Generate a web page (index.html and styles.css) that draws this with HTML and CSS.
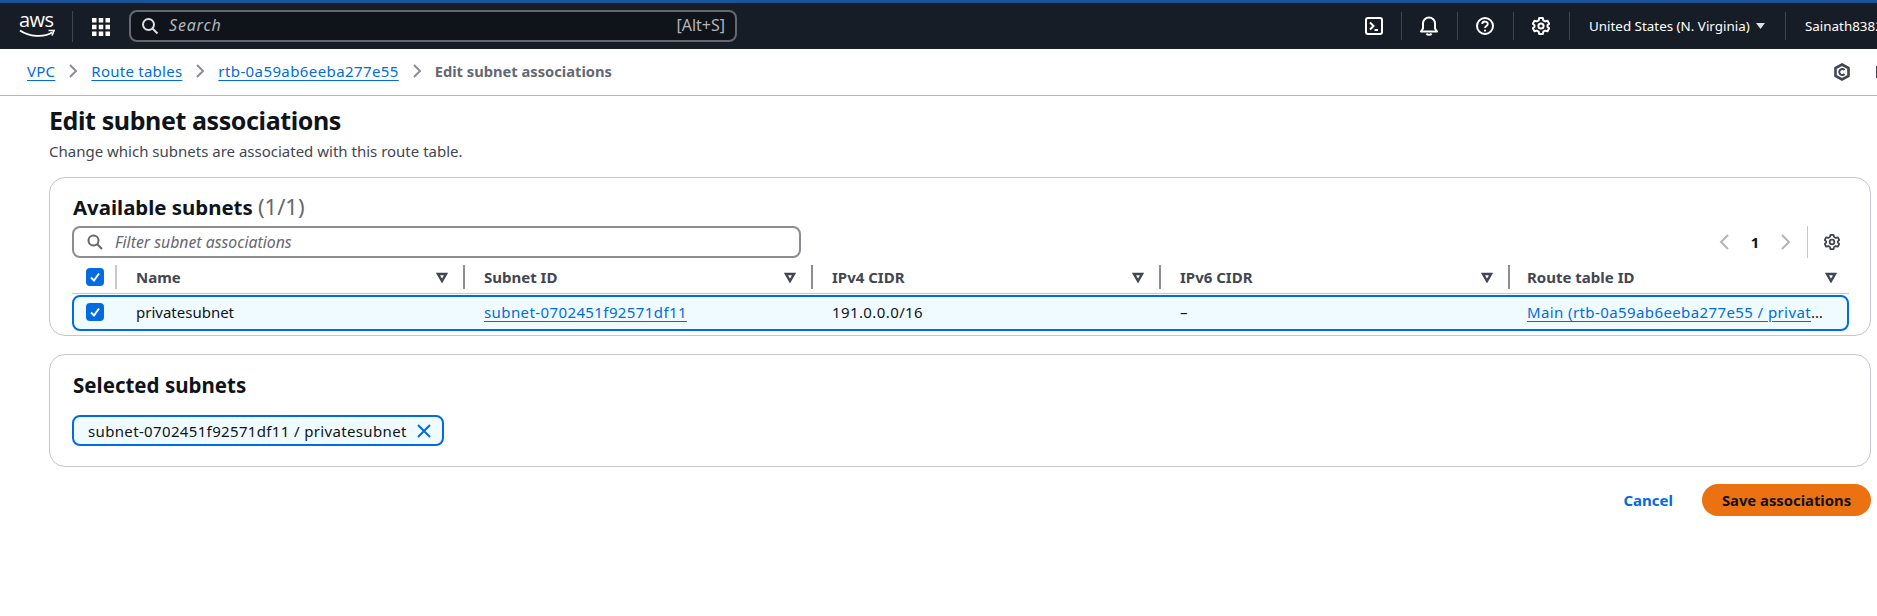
FILE: index.html
```html
<!DOCTYPE html>
<html lang="en">
<head>
<meta charset="utf-8">
<title>Edit subnet associations</title>
<link rel="stylesheet" href="styles.css">
</head>
<body>
<header class="topnav">
  <div class="logo">
    <span class="logo-text">aws</span>
    <svg class="smile" width="36" height="9" viewBox="0 0 36 9"><path d="M1 1.5C10 8 25 8.5 33 3.5" fill="none" stroke="#fff" stroke-width="1.8"/><path d="M29.5 1.5L35 1.5L33 6.5" fill="none" stroke="#fff" stroke-width="1.6"/></svg>
  </div>
  <div class="apps">
    <svg width="18" height="18" viewBox="0 0 18 18" fill="#fff"><rect x="0" y="0" width="4.5" height="4.5"/><rect x="6.75" y="0" width="4.5" height="4.5"/><rect x="13.5" y="0" width="4.5" height="4.5"/><rect x="0" y="6.75" width="4.5" height="4.5"/><rect x="6.75" y="6.75" width="4.5" height="4.5"/><rect x="13.5" y="6.75" width="4.5" height="4.5"/><rect x="0" y="13.5" width="4.5" height="4.5"/><rect x="6.75" y="13.5" width="4.5" height="4.5"/><rect x="13.5" y="13.5" width="4.5" height="4.5"/></svg>
  </div>
  <div class="search">
    <svg width="18" height="18" viewBox="0 0 18 18" fill="none" stroke="#dedee3" stroke-width="2"><circle cx="7.5" cy="7.5" r="5.5"/><path d="M11.5 11.5L16.5 16.5"/></svg>
    <span class="search-ph">Search</span>
    <span class="search-key">[Alt+S]</span>
  </div>
  <div class="nav-right">
    <div class="nav-cell cell-term">
      <svg width="18" height="18" viewBox="0 0 18 18" fill="none" stroke="#fff" stroke-width="2"><rect x="1" y="1" width="16" height="16" rx="2"/><path d="M5 5.5L8.5 9L5 12.5M9.5 13H13"/></svg>
    </div>
    <div class="nav-cell cell-icon">
      <svg width="18" height="20" viewBox="0 0 18 20" fill="none" stroke="#fff" stroke-width="2"><path d="M1 15.5H17L15 12.5V7.5A6 6 0 0 0 3 7.5V12.5Z" stroke-linejoin="round"/><path d="M6.5 17.5C7.5 19.3 10.5 19.3 11.5 17.5"/></svg>
    </div>
    <div class="nav-cell cell-icon">
      <svg width="18" height="18" viewBox="0 0 18 18" fill="none" stroke="#fff" stroke-width="2"><circle cx="9" cy="9" r="8"/><path d="M6.2 7C6.4 3.6 11.8 3.8 11.8 7C11.8 9 9 9 9 11" stroke-width="1.8"/><circle cx="9" cy="13.6" r="1.1" fill="#fff" stroke="none"/></svg>
    </div>
    <div class="nav-cell cell-icon">
      <svg class="gear" width="18" height="18" viewBox="0 0 18 18" fill="none" stroke="#fff" stroke-width="2" stroke-linejoin="round"><circle cx="9" cy="9" r="2.6"/><path d="M7.2 1H10.8L11.3 3.3L13.2 4.4L15.5 3.7L17.2 6.8L15.5 8.3V9.7L17.2 11.2L15.5 14.3L13.2 13.6L11.3 14.7L10.8 17H7.2L6.7 14.7L4.8 13.6L2.5 14.3L0.8 11.2L2.5 9.7V8.3L0.8 6.8L2.5 3.7L4.8 4.4L6.7 3.3Z"/></svg>
    </div>
    <div class="nav-cell cell-region">
      <span>United States (N. Virginia)</span>
      <svg width="9" height="6" viewBox="0 0 9 6" fill="#dedee3"><path d="M0 0H9L4.5 6Z"/></svg>
    </div>
    <div class="nav-cell cell-user">Sainath8382</div>
  </div>
</header>

<nav class="crumbbar">
  <a class="link crumb-word" href="#">VPC</a>
  <svg class="chev" width="10" height="14" viewBox="0 0 10 14" fill="none" stroke="#8c8c94" stroke-width="2"><path d="M2 1L8 7L2 13"/></svg>
  <a class="link crumb-word" href="#">Route tables</a>
  <svg class="chev" width="10" height="14" viewBox="0 0 10 14" fill="none" stroke="#8c8c94" stroke-width="2"><path d="M2 1L8 7L2 13"/></svg>
  <a class="link ids" href="#">rtb-0a59ab6eeba277e55</a>
  <svg class="chev" width="10" height="14" viewBox="0 0 10 14" fill="none" stroke="#8c8c94" stroke-width="2"><path d="M2 1L8 7L2 13"/></svg>
  <span class="crumb-current">Edit subnet associations</span>
  <div class="crumb-tools">
    <svg width="16" height="18" viewBox="0 0 16 18" fill="none" stroke="#424650" stroke-width="2.6"><path d="M8 1.5L14.5 5V13L8 16.5L1.5 13V5Z"/><path d="M10.5 7A3 3 0 1 0 10.5 11" stroke-width="2"/></svg>
    <span class="clipped-tool"></span>
  </div>
</nav>

<main class="page">
  <h1 class="title">Edit subnet associations</h1>
  <p class="subtitle">Change which subnets are associated with this route table.</p>

  <section class="card card-table">
    <h2 class="card-title">Available subnets <span class="count">(1/1)</span></h2>
    <div class="toolbar">
      <div class="filter">
        <svg width="16" height="16" viewBox="0 0 16 16" fill="none" stroke="#656871" stroke-width="2"><circle cx="6.5" cy="6.5" r="5"/><path d="M10.2 10.2L15 15"/></svg>
        <span class="filter-ph">Filter subnet associations</span>
      </div>
      <div class="pager">
        <svg width="10" height="16" viewBox="0 0 10 16" fill="none" stroke="#b4b4bb" stroke-width="2"><path d="M9 1L2 8L9 15"/></svg>
        <span class="page-num">1</span>
        <svg width="10" height="16" viewBox="0 0 10 16" fill="none" stroke="#b4b4bb" stroke-width="2"><path d="M1 1L8 8L1 15"/></svg>
        <span class="pager-sep"></span>
        <svg width="16" height="18" viewBox="0 0 18 18" fill="none" stroke="#424650" stroke-width="2" stroke-linejoin="round"><circle cx="9" cy="9" r="2.6"/><path d="M7.2 1H10.8L11.3 3.3L13.2 4.4L15.5 3.7L17.2 6.8L15.5 8.3V9.7L17.2 11.2L15.5 14.3L13.2 13.6L11.3 14.7L10.8 17H7.2L6.7 14.7L4.8 13.6L2.5 14.3L0.8 11.2L2.5 9.7V8.3L0.8 6.8L2.5 3.7L4.8 4.4L6.7 3.3Z"/></svg>
      </div>
    </div>

    <div class="grid-row head-row">
      <div class="cell-check"><span class="check"><svg width="12" height="12" viewBox="0 0 12 12" fill="none" stroke="#fff" stroke-width="2"><path d="M2 6.5L5 9.5L10 2.5"/></svg></span></div>
      <div class="col col-first"><span>Name</span><svg class="sort" width="12" height="11" viewBox="0 0 12 11" fill="none" stroke="#424650" stroke-width="2.4"><path d="M2 2H10L6 9Z"/></svg></div>
      <div class="col"><span>Subnet ID</span><svg class="sort" width="12" height="11" viewBox="0 0 12 11" fill="none" stroke="#424650" stroke-width="2.4"><path d="M2 2H10L6 9Z"/></svg></div>
      <div class="col"><span>IPv4 CIDR</span><svg class="sort" width="12" height="11" viewBox="0 0 12 11" fill="none" stroke="#424650" stroke-width="2.4"><path d="M2 2H10L6 9Z"/></svg></div>
      <div class="col"><span>IPv6 CIDR</span><svg class="sort" width="12" height="11" viewBox="0 0 12 11" fill="none" stroke="#424650" stroke-width="2.4"><path d="M2 2H10L6 9Z"/></svg></div>
      <div class="col col-last"><span>Route table ID</span><svg class="sort" width="12" height="11" viewBox="0 0 12 11" fill="none" stroke="#424650" stroke-width="2.4"><path d="M2 2H10L6 9Z"/></svg></div>
    </div>

    <div class="grid-row data-row">
      <div class="cell-check"><span class="check"><svg width="12" height="12" viewBox="0 0 12 12" fill="none" stroke="#fff" stroke-width="2"><path d="M2 6.5L5 9.5L10 2.5"/></svg></span></div>
      <div class="td">privatesubnet</div>
      <div class="td"><a class="link ids" href="#">subnet-0702451f92571df11</a></div>
      <div class="td ids">191.0.0.0/16</div>
      <div class="td">–</div>
      <div class="td td-trunc"><a class="link ids" href="#">Main (rtb-0a59ab6eeba277e55 / privatesubnet)</a></div>
    </div>
  </section>

  <section class="card card-selected">
    <h2 class="card-title card-title-sel">Selected subnets</h2>
    <div class="token">
      <span class="ids token-text">subnet-0702451f92571df11 / privatesubnet</span>
      <svg width="16" height="16" viewBox="0 0 16 16" fill="none" stroke="#006ce0" stroke-width="2"><path d="M2 2L14 14M14 2L2 14"/></svg>
    </div>
  </section>

  <div class="actions">
    <a class="cancel" href="#">Cancel</a>
    <button class="save" type="button">Save associations</button>
  </div>
</main>
</body>
</html>
```
FILE: styles.css
```css
* { box-sizing: border-box; }
html, body { margin: 0; padding: 0; height: 100%; overflow: hidden; background: #fff; }
body { font-family: "Noto Sans", "Open Sans", sans-serif; font-size: 15px; color: #0f141a; }

.ids { letter-spacing: 0.4px; }

.topnav {
  height: 49px;
  display: flex;
  align-items: center;
  background: #161d26;
  border-top: 3px solid #1a5399;
  color: #fff;
  overflow: hidden;
}
.logo {
  width: 73px;
  height: 31px;
  padding-left: 19px;
  border-right: 1px solid #424650;
  display: flex;
  flex-direction: column;
  flex: none;
}
.logo-text { font-size: 20px; line-height: 17px; letter-spacing: -0.5px; color: #fff; font-family: "Open Sans", sans-serif; }
.smile { display: block; margin-top: 1px; }
.apps { width: 56px; flex: none; display: flex; justify-content: center; padding-top: 1px; }
.search {
  width: 608px;
  height: 32px;
  flex: none;
  display: flex;
  align-items: center;
  gap: 10px;
  padding: 0 10px;
  background: #0f141a;
  border: 2px solid #656871;
  border-radius: 8px;
  color: #b4b4bb;
}
.search-ph { font-style: italic; font-size: 16px; letter-spacing: 0.8px; line-height: 20px; margin-top: -2px; }
.search-key { margin-left: auto; font-size: 16px; line-height: 20px; margin-top: -2px; }
.nav-right { display: flex; align-items: center; margin-left: 608px; flex: none; }
.nav-cell { display: flex; align-items: center; justify-content: center; height: 28px; flex: none; border-left: 1px solid #424650; }
.cell-term { width: 56px; border-left: 0; justify-content: flex-start; padding-left: 20px; }
.cell-icon { width: 56px; padding-right: 2px; }
.gear { margin-left: 1px; }
.cell-region { width: 216px; justify-content: flex-start; padding-left: 19px; gap: 6px; font-size: 13.4px; white-space: nowrap; }
.cell-user { width: 120px; justify-content: flex-start; padding-left: 19px; font-size: 13.4px; white-space: nowrap; }

.crumbbar {
  height: 47px;
  display: flex;
  align-items: center;
  padding: 0 0 2px 27px;
  border-bottom: 1px solid #b4b4bb;
}
.link { color: #006ce0; text-decoration: underline; text-underline-offset: 3px; }
.crumb-word { letter-spacing: 0.25px; }
.chev { margin: 0 13px; flex: none; }
.crumb-current { color: #656871; font-weight: 700; font-size: 14.7px; }
.crumb-tools { margin-left: auto; display: flex; align-items: center; gap: 26px; margin-right: -1px; margin-top: 2px; }
.clipped-tool { width: 2px; height: 12px; background: #424650; }

.page { padding: 9px 6px 0 49px; }
.title { margin: 0; font-size: 25px; line-height: 30px; font-weight: 700; letter-spacing: -0.4px; }
.subtitle { margin: 6px 0 0; line-height: 20px; color: #424650; }

.card { border: 1px solid #c6c6cd; border-radius: 16px; padding: 0 21px 0 22px; }
.card-table { margin-top: 16px; height: 159px; padding-top: 15px; }
.card-title { margin: 0 0 0 1px; font-size: 20.4px; line-height: 26px; font-weight: 700; }
.card-title-sel { font-size: 20.5px; }
.count { font-weight: 400; color: #656871; font-size: 22px; }

.toolbar { display: flex; align-items: center; justify-content: space-between; margin-top: 6px; height: 32px; padding-right: 9px; }
.filter {
  width: 729px;
  height: 32px;
  display: flex;
  align-items: center;
  gap: 12px;
  padding-left: 13px;
  border: 2px solid #8c8c94;
  border-radius: 8px;
  color: #656871;
}
.filter-ph { font-style: italic; font-size: 15.8px; line-height: 20px; }
.pager { display: flex; align-items: center; height: 32px; }
.page-num { width: 52px; text-align: center; font-weight: 700; }
.pager-sep { width: 1px; height: 32px; background: #c6c6cd; margin: 0 16px; }

.grid-row { display: grid; align-items: center; }
.head-row { grid-template-columns: 43px 348px 348px 348px 349px 1fr; height: 36px; padding-top: 3px; border-bottom: 1px solid #c6c6cd; font-weight: 700; color: #424650; }
.data-row { grid-template-columns: 42px 348px 348px 348px 349px 1fr; height: 36px; padding-bottom: 3px; background: #f0fbff; border: 2px solid #006ce0; border-radius: 8px; margin-top: 1px; }
.cell-check { display: flex; align-items: center; }
.head-row .cell-check { padding-left: 14px; }
.data-row .cell-check { padding-left: 12px; }
.check { width: 18px; height: 18px; border-radius: 4px; background: #006ce0; display: flex; align-items: center; justify-content: center; }
.col {
  height: 24px;
  display: flex;
  align-items: center;
  justify-content: space-between;
  padding: 0 15px 0 19px;
  border-left: 2px solid #8c8c94;
}
.col-first { border-left-color: #c6c6cd; }
.col-last { padding: 0 12px 0 17px; }
.sort { flex: none; }
.td { padding-left: 20px; white-space: nowrap; overflow: hidden; }
.td-trunc { padding: 0 20px 0 18px; text-overflow: ellipsis; }

.card-selected { margin-top: 18px; height: 113px; padding-top: 17px; }
.token {
  display: inline-flex;
  align-items: center;
  gap: 9px;
  height: 31px;
  margin: 17px 0 0 0;
  padding: 0 10px 0 14px;
  background: #f0fbff;
  border: 2px solid #006ce0;
  border-radius: 8px;
}
.token-text { letter-spacing: 0.35px; }

.actions { display: flex; align-items: center; justify-content: flex-end; gap: 29px; margin-top: 17px; }
.cancel { color: #006ce0; font-weight: 700; text-decoration: none; font-size: 15px; }
.save {
  width: 169px;
  height: 32px;
  border: 0;
  border-radius: 16px;
  background: #ec7211;
  color: #0f141a;
  font: 700 14.8px "Noto Sans", "Open Sans", sans-serif;
  padding: 0;
}
```
